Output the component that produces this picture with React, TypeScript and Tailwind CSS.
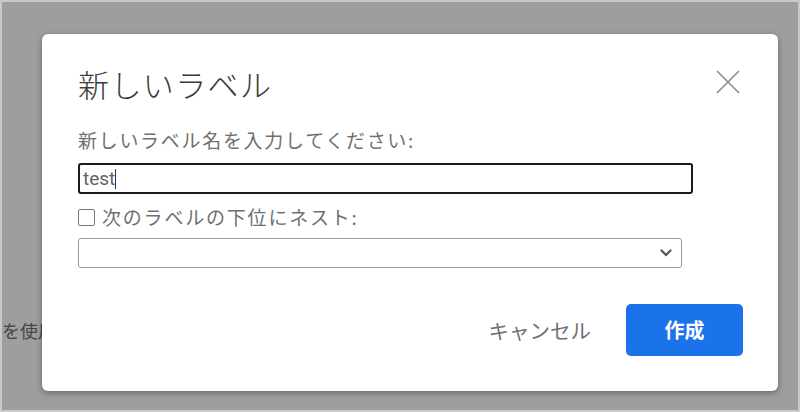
import React from "react";

const jp = { fontFamily: '"Noto Sans CJK JP", "Noto Sans", sans-serif' };

export default function App() {
  return (
    <div
      className="relative w-[800px] h-[412px] overflow-hidden bg-[#9d9ea0] border-2 border-[#c9c9c9]"
      style={jp}
    >
      <div className="absolute left-0 top-[316px] text-[18px] leading-[24px] text-[#454545]">
        を使用する
      </div>

      <div className="absolute left-[40px] top-[32px] w-[736px] h-[357px] bg-white rounded-[6px] shadow-[0_2px_6px_rgba(0,0,0,0.35)] flex flex-col pl-[36px] pt-[30px]">
        <div className="flex items-center justify-between pr-[38px] h-[40px]">
          <div className="text-[31px] leading-[40px] font-light tracking-[1.4px] text-[#3c3c3c]">新しいラベル</div>
          <svg width="24" height="24" viewBox="0 0 24 24" className="mt-[-5px]">
            <path d="M1 1 L23 23 M23 1 L1 23" stroke="#8a8a8a" strokeWidth="1.6" fill="none" />
          </svg>
        </div>

        <div className="mt-[24px] text-[19px] leading-[24px] tracking-[1.7px] text-[#707070]">
          新しいラベル名を入力してください:
        </div>

        <div className="mt-[11px] w-[615px] h-[31px] border-2 border-[#1a1a1a] rounded-[3px] flex items-center pl-[3px]">
          <span
            className="text-[19px] leading-[24px] text-[#5f6368]"
            style={{ fontFamily: 'Roboto, "Noto Sans", sans-serif' }}
          >
            test
          </span>
          <span className="w-[1px] h-[20px] bg-[#333]" />
        </div>

        <div className="mt-[11px] h-[24px] flex items-center">
          <span className="w-[17px] h-[17px] border-[1.5px] border-[#7a7a7a] rounded-[2px] bg-white" />
          <span className="ml-[7px] text-[19px] leading-[24px] tracking-[1.8px] text-[#707070]">
            次のラベルの下位にネスト:
          </span>
        </div>

        <div className="mt-[9px] w-[604px] h-[30px] border border-[#9a9a9a] rounded-[3px] flex items-center justify-end pr-[9px]">
          <svg width="12" height="8" viewBox="0 0 12 8">
            <path d="M1.5 1.5 L6 6 L10.5 1.5" stroke="#555" strokeWidth="2.2" fill="none" strokeLinecap="round" />
          </svg>
        </div>

        <div className="mt-[36px] flex items-center justify-end pr-[35px] gap-[35px]">
          <span className="text-[20.5px] leading-[28px] text-[#707070]">キャンセル</span>
          <button className="w-[117px] h-[52px] rounded-[5px] bg-[#1a73e8] text-white text-[20px] font-bold">
            作成
          </button>
        </div>
      </div>
    </div>
  );
}
